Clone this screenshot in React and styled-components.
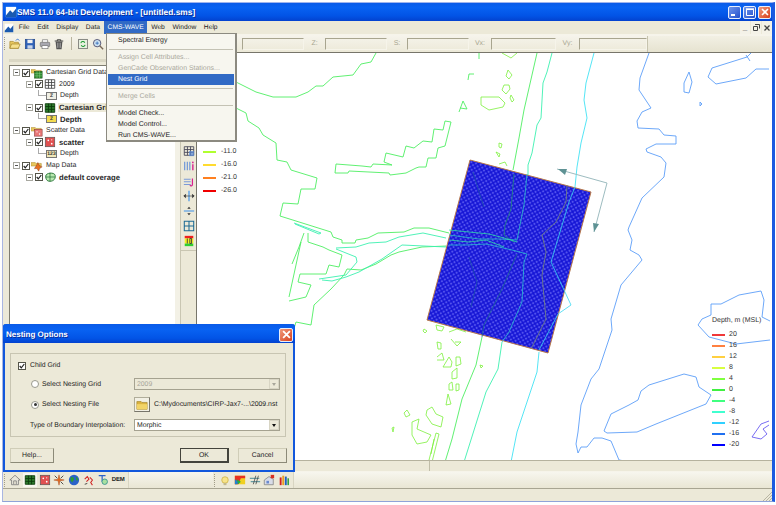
import styled, { createGlobalStyle } from 'styled-components';

const GlobalStyle = createGlobalStyle`
  html, body { margin: 0; padding: 0; background: #fff; }
  body {
    font-family: "Liberation Sans", Arial, sans-serif;
    font-size: 7px;
    color: #222;
    text-rendering: geometricPrecision;
  }
`;

const beige = '#ece9d8';

const Window = styled.div`
  position: relative;
  box-sizing: border-box;
  margin: 2px 0 0 2px;
  width: 773px;
  height: 500px;
  display: flex;
  flex-direction: column;
  background: ${beige};
  border-left: 1px solid #a9b6e2;
  border-right: 3px solid #1c5ae0;
  border-bottom: 1px solid #8fa3d8;
  border-top: 1px solid #9fb4ee;
  overflow: hidden;
  will-change: opacity;
`;

const TitleBar = styled.div`
  height: 18px;
  flex: none;
  display: flex;
  align-items: center;
  padding: 0 1px 0 2px;
  color: #fff;
  font-weight: bold;
  font-size: 8.4px;
  background: linear-gradient(#0a5be8 0%, #0862f2 25%, #0254e6 70%, #0342cf 100%);
`;

const TitleText = styled.span`
  flex: 1;
  text-shadow: 1px 1px 0 #0a2f9c;
`;

const CaptionButton = styled.div`
  width: 13px;
  height: 13px;
  margin-left: 2px;
  box-sizing: border-box;
  border: 1px solid #e8eefc;
  border-radius: 2px;
  background: ${(p) => (p.$close ? 'linear-gradient(135deg,#f09a7c,#d8401c)' : 'linear-gradient(135deg,#6f95ec,#2350cc)')};
  display: flex;
  align-items: center;
  justify-content: center;
`;

const MenuBar = styled.div`
  height: 13px;
  flex: none;
  display: flex;
  align-items: stretch;
  font-size: 6.7px;
  background: ${beige};
  border-bottom: 1px solid #f6f4ea;
`;

const MenuLogo = styled.div`
  width: 11px;
  padding-left: 1px;
  display: flex;
  align-items: center;
`;

const MenuItem = styled.div`
  padding: 0 3.8px;
  display: flex;
  align-items: center;
  color: ${(p) => (p.$active ? '#fff' : '#222')};
  background: ${(p) => (p.$active ? '#316ac5' : 'transparent')};
`;

const MdiButtons = styled.div`
  margin-left: auto;
  display: flex;
  gap: 1px;
`;

const MdiButton = styled.div`
  width: 10px;
  background: #f4f2e8;
  display: flex;
  align-items: center;
  justify-content: center;
  font-size: 8px;
  color: #444;
  font-weight: bold;
`;

const TopToolbar = styled.div`
  height: 17px;
  flex: none;
  display: flex;
  align-items: center;
  background: linear-gradient(#f6f4ec, ${beige});
`;

const Grip = styled.div`
  width: 2px;
  height: 13px;
  margin: 0 1px;
  border-left: 1px dotted #a09c88;
`;

const ToolButton = styled.div`
  width: 14.7px;
  height: 14px;
  flex: none;
  display: flex;
  align-items: center;
  justify-content: center;
  background: ${(p) => (p.$on ? '#f8f7f0' : 'transparent')};
`;

const ToolSep = styled.div`
  width: 1px;
  height: 13px;
  margin: 0 4px;
  background: #b8b49e;
`;

const CoordBar = styled.div`
  margin-left: auto;
  display: flex;
  align-items: center;
  color: #a8a690;
`;

const CoordLabel = styled.div`
  width: ${(p) => p.$w}px;
  text-align: center;
`;

const CoordField = styled.div`
  width: ${(p) => p.$w}px;
  height: 12px;
  box-sizing: border-box;
  border: 1px solid #a8a58f;
  border-right-color: #f6f4ea;
  border-bottom-color: #f6f4ea;
`;

const CoordTail = styled.div`
  width: 124px;
  height: 16px;
  flex: none;
  border-left: 1px solid #c6c3ae;
  background: linear-gradient(#f2f0e4, #e6e3d0);
`;

const Workspace = styled.div`
  flex: 1;
  min-height: 0;
  display: flex;
`;

const TreeDock = styled.div`
  width: 172px;
  flex: none;
  display: flex;
  flex-direction: column;
  padding-left: 6px;
  box-sizing: border-box;
`;

const DockHandle = styled.div`
  height: 13px;
  flex: none;
  display: flex;
  align-items: center;
  &::after {
    content: '';
    flex: 1;
    height: 3px;
    background: #dad7c4;
    margin-top: 4px;
  }
`;

const TreePanel = styled.div`
  flex: 1;
  background: #fff;
  border-top: 1px solid #7f7d70;
  border-left: 1px solid #7f7d70;
  padding-top: 1px;
`;

const TreeRow = styled.div`
  height: 11.6px;
  display: flex;
  align-items: center;
  padding-left: ${(p) => 3 + p.$level * 13}px;
  font-weight: ${(p) => (p.$bold ? 'bold' : 'normal')};
  font-size: ${(p) => (p.$bold ? 7.7 : 7)}px;
  color: #2a2a2a;
  white-space: nowrap;
`;

const LeafRow = styled(TreeRow)`
  padding-left: 28px;
`;

const Elbow = styled.div`
  width: 8px;
  height: 6px;
  flex: none;
  align-self: flex-start;
  box-sizing: border-box;
  border-left: 1px solid #aaa;
  border-bottom: 1px solid #aaa;
`;

const Expander = styled.div`
  width: 7px;
  height: 7px;
  flex: none;
  margin-right: 2px;
  box-sizing: border-box;
  border: 1px solid #a8a8a0;
  position: relative;
  &::after {
    content: '';
    position: absolute;
    left: 1px;
    right: 1px;
    top: 2px;
    height: 1px;
    background: #555;
  }
`;

const CheckBox = styled.div`
  width: 8px;
  height: 8px;
  flex: none;
  box-sizing: border-box;
  border: 1px solid #55554a;
  background: #fff;
  margin-right: 1px;
  display: flex;
  align-items: center;
  justify-content: center;
`;

const TreeLabel = styled.span`
  margin-left: 2px;
  padding: 0 1px;
  background: ${(p) => (p.$sel ? beige : 'transparent')};
  flex: none;
`;

const ValueChip = styled.div`
  width: 11px;
  height: 8px;
  flex: none;
  box-sizing: border-box;
  border: 1px solid #777;
  background: ${(p) => p.$bg || '#f0efe6'};
  font-size: 5px;
  font-weight: bold;
  line-height: 6px;
  text-align: center;
  color: #333;
  overflow: hidden;
`;

const ToolStrip = styled.div`
  width: 22px;
  flex: none;
  display: flex;
  flex-direction: column;
  align-items: center;
  padding-left: 6px;
  box-sizing: border-box;
  background: linear-gradient(90deg, #f3f1e6 0 5px, #c9c6b2 5px 6px, ${beige} 6px);
  border-right: 1px solid #77756a;
`;

const StripIcons = styled.div`
  margin-top: 92px;
  display: flex;
  flex-direction: column;
  width: 100%;
  align-items: center;
  gap: 1px;
  padding-bottom: 2px;
  border-bottom: 1px solid #c9c6b2;
`;

const Canvas = styled.div`
  position: relative;
  flex: 1;
  background: #fff;
  border-top: 1px solid #77756a;
  overflow: hidden;
`;

const MapSvg = styled.svg`
  display: block;
  width: 574px;
  height: 412px;
`;

const Legend = styled.div`
  position: absolute;
  left: ${(p) => p.$x}px;
  top: ${(p) => p.$y}px;
  color: #333;
`;

const LegendTitle = styled.div`
  margin-bottom: 4px;
  height: 8px;
  line-height: 8px;
  white-space: nowrap;
`;

const LegendRow = styled.div`
  height: ${(p) => p.$h}px;
  display: flex;
  align-items: center;
`;

const Swatch = styled.div`
  width: 13px;
  height: 2px;
  margin-right: ${(p) => p.$gap}px;
  background: ${(p) => p.$c};
`;

const StatusRow = styled.div`
  height: 10px;
  flex: none;
  display: flex;
  border-top: 1px solid #b5b29e;
  border-bottom: 1px solid #f6f4ea;
`;

const StatusCell = styled.div`
  width: ${(p) => p.$w}px;
  flex: ${(p) => (p.$w ? 'none' : 1)};
  border-right: ${(p) => (p.$w ? '1px solid #c0bda8' : 'none')};
`;

const BottomToolbar = styled.div`
  height: 16px;
  flex: none;
  display: flex;
  align-items: center;
  background: linear-gradient(#f7f6ee, #e9e6d4);
  border-bottom: 1px solid #a8a592;
`;

const ToolGroup = styled.div`
  display: flex;
  align-items: center;
  width: ${(p) => p.$w}px;
  flex: none;
  height: 100%;
  border-right: 1px solid #d8d5c2;
  background: ${beige};
`;

const BlankBand = styled.div`
  width: ${(p) => p.$w}px;
  flex: none;
`;

const DemText = styled.span`
  font-size: 6px;
  font-weight: bold;
  line-height: 14px;
  color: #222;
  letter-spacing: -0.2px;
`;

const StatusBar = styled.div`
  height: 12px;
  flex: none;
  position: relative;
  background: ${beige};
`;

const Dropdown = styled.div`
  position: absolute;
  left: 103px;
  top: 30px;
  width: 131px;
  height: 109px;
  box-sizing: border-box;
  padding: 1px;
  font-size: 6.95px;
  background: #f7f6ef;
  border: 1px solid #8c8a80;
  border-right-width: 2px;
  border-bottom-width: 2px;
  z-index: 5;
`;

const DropItem = styled.div`
  height: 11px;
  line-height: 11px;
  padding-left: 10px;
  white-space: nowrap;
  color: ${(p) => (p.$off ? '#aaa89c' : p.$hot ? '#fff' : '#222')};
  background: ${(p) => (p.$hot ? '#316ac5' : 'transparent')};
`;

const DropSep = styled.div`
  height: 1px;
  margin: 2.5px 1px;
  background: #c4c2b4;
`;

const Dialog = styled.div`
  position: absolute;
  left: 0;
  top: 321px;
  width: 292px;
  height: 148px;
  box-sizing: border-box;
  display: flex;
  flex-direction: column;
  font-size: 6.85px;
  background: ${beige};
  border: 2px solid #1257dc;
  border-top: none;
  border-radius: 3px 3px 0 0;
  z-index: 6;
`;

const DialogTitle = styled.div`
  height: 19px;
  margin: 0 -2px;
  flex: none;
  display: flex;
  align-items: center;
  justify-content: space-between;
  padding: 2px 2px 0 3px;
  box-sizing: border-box;
  color: #fff;
  font-weight: bold;
  font-size: 8px;
  border-radius: 3px 3px 0 0;
  background: linear-gradient(#0a5be8, #0862f2 30%, #0254e6 75%, #0342cf);
  text-shadow: 1px 1px 0 #0a2f9c;
`;

const DialogClose = styled(CaptionButton)`
  width: 14px;
  height: 14px;
`;

const GroupBox = styled.div`
  margin: 10px 7px 0 5px;
  height: 84px;
  box-sizing: border-box;
  border: 1px solid #c8c5b2;
  padding: 7px 5px 0 7px;
  display: flex;
  flex-direction: column;
`;

const FieldRow = styled.div`
  display: flex;
  align-items: center;
  height: ${(p) => p.$h}px;
  margin-top: ${(p) => p.$mt || 0}px;
  padding-left: ${(p) => p.$indent || 0}px;
  flex: none;
`;

const FieldLabel = styled.span`
  width: ${(p) => p.$w}px;
  margin-left: ${(p) => p.$ml || 0}px;
  flex: none;
  white-space: nowrap;
`;

const Radio = styled.div`
  width: 8px;
  height: 8px;
  margin-right: 3px;
  flex: none;
  border-radius: 50%;
  box-sizing: border-box;
  border: 1px solid #9a9a8e;
  background: #fff;
  display: flex;
  align-items: center;
  justify-content: center;
  &::after {
    content: '';
    width: 3px;
    height: 3px;
    border-radius: 50%;
    background: ${(p) => (p.$on ? '#333' : 'transparent')};
  }
`;

const Select = styled.div`
  width: 146px;
  height: 12px;
  box-sizing: border-box;
  flex: none;
  display: flex;
  align-items: center;
  justify-content: space-between;
  padding-left: 2px;
  border: 1px solid #a5a290;
  background: ${(p) => (p.$off ? beige : '#fff')};
  color: ${(p) => (p.$off ? '#a8a69a' : '#222')};
`;

const SelectArrow = styled.div`
  width: 10px;
  height: 10px;
  box-sizing: border-box;
  border: 1px solid #d8d5c4;
  background: ${beige};
  display: flex;
  align-items: center;
  justify-content: center;
  &::after {
    content: '';
    border-left: 2.5px solid transparent;
    border-right: 2.5px solid transparent;
    border-top: 3px solid ${(p) => (p.$off ? '#a8a69a' : '#111')};
  }
`;

const FolderButton = styled.div`
  width: 16px;
  height: 15px;
  flex: none;
  box-sizing: border-box;
  border: 1px solid #b0ad9a;
  border-right-color: #77756a;
  border-bottom-color: #77756a;
  background: #f2f0e4;
  margin-right: 4px;
  display: flex;
  align-items: center;
  justify-content: center;
`;

const PathText = styled.span`
  white-space: nowrap;
  font-size: 6.9px;
`;

const ButtonRow = styled.div`
  margin: 11px 7px 0 5px;
  display: flex;
`;

const PushButton = styled.div`
  width: ${(p) => p.$w}px;
  margin-left: ${(p) => p.$ml || 0}px;
  height: 15px;
  flex: none;
  box-sizing: border-box;
  display: flex;
  align-items: center;
  justify-content: center;
  background: ${beige};
  border: 1px solid ${(p) => (p.$main ? '#44443c' : '#d0cdb8')};
  border-right: ${(p) => (p.$main ? 2 : 1)}px solid ${(p) => (p.$main ? '#44443c' : '#8c8a78')};
  border-bottom: ${(p) => (p.$main ? 2 : 1)}px solid ${(p) => (p.$main ? '#44443c' : '#8c8a78')};
`;

const Resize = styled.svg`
  position: absolute;
  right: 0;
  bottom: 0;
`;

const GlyphSvg = styled.svg`
  flex: none;
  display: block;
`;

// --- icons --------------------------------------------------------------

const TinyCheck = () => (
  <svg width="6" height="6" viewBox="0 0 6 6">
    <path d="M.7 3 2.3 4.8 5.3 1" fill="none" stroke="#222" strokeWidth="1.2" />
  </svg>
);

const gridLines = (c) => (
  <path d="M1.5 2h11v10h-11zM1.5 5.3h11M1.5 8.6h11M5.2 2v10M8.8 2v10" fill="none" stroke={c} strokeWidth="1" />
);

const ICONS = {
  logo: (
    <>
      <rect x="1" y="1" width="12" height="12" fill="#fff" />
      <path d="M1 11 6 5l3 3 4-5v10H1z" fill="#1a5ab0" />
    </>
  ),
  open: (
    <>
      <path d="M1 4h4l1 1h5v7H1z" fill="#e8c860" stroke="#9a7a20" strokeWidth=".7" />
      <path d="M3 7h10l-2 5H1z" fill="#f6e08c" stroke="#9a7a20" strokeWidth=".7" />
      <path d="M8 3c1-2 3-2 4 0" fill="none" stroke="#2a6ad0" strokeWidth="1" />
    </>
  ),
  save: (
    <>
      <rect x="1.5" y="1.5" width="11" height="11" fill="#2f62b8" stroke="#1d3f80" strokeWidth=".7" />
      <rect x="4" y="2" width="6" height="4" fill="#f0f0f0" />
      <rect x="4" y="8.5" width="6" height="4" fill="#c8d4e8" />
    </>
  ),
  print: (
    <>
      <path d="M4 5V2h6v3" fill="#fff" stroke="#666" strokeWidth=".7" />
      <rect x="1.5" y="5" width="11" height="5" rx="1" fill="#a8a8b0" stroke="#666" strokeWidth=".7" />
      <rect x="3.5" y="9" width="7" height="3.5" fill="#fff" stroke="#666" strokeWidth=".7" />
    </>
  ),
  trash: (
    <>
      <path d="M2 3.5h10M5 3.5V2h4v1.5" fill="none" stroke="#333" strokeWidth="1" />
      <path d="M3 4h8l-1 9H4z" fill="#555" />
      <path d="M5.3 5.5v6M7 5.5v6M8.7 5.5v6" stroke="#ccc" strokeWidth=".6" />
    </>
  ),
  refresh: (
    <>
      <rect x="2" y="1.5" width="10" height="11" fill="#e8f0e0" stroke="#444" strokeWidth=".7" />
      <path d="M4.5 6a2.5 2.5 0 0 1 4.6-.6M9.5 8a2.5 2.5 0 0 1-4.6.6" fill="none" stroke="#1a9a30" strokeWidth="1.2" />
    </>
  ),
  zoom: (
    <>
      <circle cx="6" cy="6" r="4.3" fill="#cfe4f4" stroke="#446" strokeWidth="1" />
      <path d="M9 9l4 4" stroke="#765" strokeWidth="1.6" />
      <path d="M4 6h4M6 4v4" stroke="#1a5ab0" strokeWidth=".8" />
    </>
  ),
  treeCart: (
    <>
      <path d="M0 3h5l1 1h6v3H0z" fill="#e8c860" stroke="#a88a30" strokeWidth=".6" />
      <rect x="4" y="5" width="9" height="8" fill="#2d8a2d" stroke="#1a4a1a" strokeWidth=".6" />
      <path d="M4 7.7h9M4 10.3h9M7 5v8M10 5v8" stroke="#9ad89a" strokeWidth=".5" />
    </>
  ),
  treeScatter: (
    <>
      <path d="M0 3h5l1 1h6v3H0z" fill="#e8c860" stroke="#a88a30" strokeWidth=".6" />
      <rect x="4" y="5" width="9" height="8" fill="#e87878" stroke="#803030" strokeWidth=".6" />
      <circle cx="7" cy="8" r=".8" fill="#fff" />
      <circle cx="10" cy="10.5" r=".8" fill="#fff" />
    </>
  ),
  treeMap: (
    <>
      <path d="M0 3h5l1 1h6v3H0z" fill="#e8c860" stroke="#a88a30" strokeWidth=".6" />
      <path d="M8 3l2 4 3 1-3 2-1 3-2-3-3 0 2-3z" fill="#e87020" stroke="#803010" strokeWidth=".5" />
    </>
  ),
  gridGray: gridLines('#444'),
  gridGreen: (
    <>
      <rect x="1.5" y="2" width="11" height="10" fill="#2c7a2c" />
      {gridLines('#0c3a0c')}
    </>
  ),
  scatter: (
    <>
      <rect x="1.5" y="1.5" width="11" height="11" fill="#e05050" stroke="#555" strokeWidth=".8" />
      <circle cx="5" cy="5" r="1" fill="#fff" />
      <circle cx="9" cy="9" r="1" fill="#fff" />
      <circle cx="9" cy="4.5" r=".7" fill="#fff" />
    </>
  ),
  coverage: (
    <>
      <path d="M2 6c0-4 10-5 11-1s-2 7-6 7-5-3-5-6z" fill="#b8e8b0" stroke="#1c6a2c" strokeWidth="1" />
      <path d="M7 2v10M2 7h11" stroke="#1c6a2c" strokeWidth=".8" />
    </>
  ),
  stripGrid: (
    <>
      {gridLines('#445')}
      <path d="M7 7h6v6H7z" fill="#5a8ad8" opacity=".7" />
    </>
  ),
  stripBars: (
    <>
      <path d="M2 2v10M5 2v10M8 2v10" stroke="#5a8ad8" strokeWidth="1.2" fill="none" />
      <path d="M11.5 5v7" stroke="#d82090" strokeWidth="1.6" />
      <circle cx="11.5" cy="2.8" r="1" fill="#d82090" />
    </>
  ),
  stripLines: (
    <>
      <path d="M1 5h8M1 8h8M1 11h8" stroke="#7a9ad8" strokeWidth="1.2" />
      <path d="M11 4v7c0 2-2 2-3 1" fill="none" stroke="#d82090" strokeWidth="1.4" />
    </>
  ),
  splitH: (
    <>
      <path d="M7 1v12" stroke="#5aa0e8" strokeWidth="1.6" />
      <path d="M1 7h12M1 7l2-2v4zM13 7l-2-2v4z" fill="#333" stroke="#333" strokeWidth=".7" />
    </>
  ),
  splitV: (
    <>
      <path d="M1 7h12" stroke="#5aa0e8" strokeWidth="1.4" />
      <path d="M7 2l-2 2.5h4zM7 12l-2-2.5h4z" fill="#333" />
    </>
  ),
  quad: (
    <path d="M1.5 1.5h11v11h-11zM7 1.5v11M1.5 7h11" fill="none" stroke="#1c6a94" strokeWidth="1.2" />
  ),
  legend10: (
    <>
      <rect x="2" y="1" width="10" height="3" fill="#f02020" />
      <rect x="2" y="4" width="10" height="6" fill="#f4f020" />
      <rect x="2" y="10" width="10" height="3" fill="#30d030" />
      <path d="M5 4v6M8 4h2v6H8z" fill="none" stroke="#333" strokeWidth="1" />
    </>
  ),
  house: (
    <path d="M7 1.5 1 7h2v5.5h8V7h2zM5.5 12V8h3v4" fill="#e8e6da" stroke="#777" strokeWidth=".9" />
  ),
  star: (
    <>
      <path d="M7 1 8 6l5 1-5 1-1 5-1-5-5-1 5-1z" fill="#e86818" stroke="#a03808" strokeWidth=".5" />
      <path d="M2 2l3 3M12 12 9 9M12 2 9 5" stroke="#222" strokeWidth=".9" />
    </>
  ),
  globe: (
    <>
      <circle cx="7" cy="7" r="6" fill="#2a62c8" />
      <path d="M3 4c2-1 4 0 4 2s-2 2-2 4L3 8zM9 3c2 1 3 3 3 4l-2 1z" fill="#2a9a3a" />
    </>
  ),
  squiggle: (
    <>
      <path d="M2 6 5 3l2 3-3 3M8 4l3 3-2 3 2 3" fill="none" stroke="#d02020" strokeWidth="1.2" />
      <path d="M2 12l3-1" stroke="#333" strokeWidth="1" />
    </>
  ),
  mapText: (
    <>
      <path d="M2 2h8M6 2v7" stroke="#2a62c8" strokeWidth="1.4" />
      <circle cx="9" cy="9" r="3.2" fill="#a8e0a0" stroke="#2a8a8a" strokeWidth=".9" />
    </>
  ),
  bulb: (
    <>
      <circle cx="7" cy="7" r="3.8" fill="#f6e48c" stroke="#c8a838" strokeWidth=".8" />
      <rect x="5.3" y="10.5" width="3.4" height="2.5" fill="#c0b890" />
    </>
  ),
  rainbow: (
    <>
      <rect x="1" y="2" width="12" height="10" fill="#f0d020" />
      <path d="M1 2h12v3H8L5 12H1z" fill="#e83020" />
      <path d="M1 6l4 3-1 3H1z" fill="#2080d0" />
      <path d="M3 6l5 3-3 3z" fill="#20b040" />
    </>
  ),
  flow: (
    <>
      <path d="M1 5h11M2 9h11" stroke="#2a7a8a" strokeWidth="1" />
      <path d="M8 2l-3 10M11 2 8 12" stroke="#444" strokeWidth=".9" />
    </>
  ),
  box: (
    <>
      <path d="M1.5 7 7 3l5 3v6.5H1.5z" fill="#d8dce8" stroke="#777" strokeWidth=".8" />
      <rect x="9" y="1" width="4" height="4" fill="#d83020" />
      <rect x="4" y="8" width="3" height="3" fill="#6a8ad0" />
    </>
  ),
  bars: (
    <>
      <rect x="2" y="4" width="2.2" height="9" fill="#d02020" />
      <rect x="5" y="2" width="2.2" height="11" fill="#e8a020" />
      <rect x="8" y="3" width="2.2" height="10" fill="#2060c0" />
      <rect x="11" y="5" width="1.8" height="8" fill="#30a040" />
    </>
  ),
  folderBig: (
    <>
      <path d="M1 3h5l1 1h6v8H1z" fill="#dcb440" stroke="#9a7a20" strokeWidth=".7" />
      <path d="M1 6h12v6H1z" fill="#f2d468" />
    </>
  ),
};

const Glyph = ({ name, size = 12 }) => (
  <GlyphSvg width={size} height={size} viewBox="0 0 14 14">
    {ICONS[name]}
  </GlyphSvg>
);

// --- map data, in page coordinates ---------------------------------------

const GREEN = '#4eee62';
const TEAL = '#3cf0b0';
const CYAN = '#42e2f4';
const BLUE = '#5c9ef8';
const LIME = '#7cf03c';

const contours = [
  [GREEN, '237,80 257,90 274,95 297,95 309,90 317,84 324,84 334,75 354,73 362,62 372,60 377,51'],
  [GREEN, '237,106 247,111 249,119 260,126 264,133 277,141 278,158 288,160 292,168 318,176 316,187 302,187 299,202 284,201 281,214 332,230 334,235 343,238 343,241 356,241 357,238 369,236 379,231 405,230 415,226 430,226 450,231'],
  [GREEN, '337,162 336,171 349,171 350,169 390,171 391,173 407,171 417,166 420,165 427,165 429,156 437,156 439,146 446,144 452,120 446,119 444,128 435,127 433,140 424,139 415,146 407,144 404,155 387,151 385,160 393,163 374,162 372,165 363,164 337,162'],
  [GREEN, '305,231 300,245 293,262'],
  [GREEN, '309,231 309,240 324,245 330,248 343,253 340,265 330,263 327,272 301,272 299,280 312,283 307,295 290,299'],
  [GREEN, '302,240 290,295'],
  [GREEN, '293,333 297,320 312,323 315,303 332,287 345,273 348,267 362,268 377,262 392,253 400,250 423,245 447,244'],
  [GREEN, '460,110 464,99 468,107 461,106'],
  [GREEN, '480,51 480,57'],
  [GREEN, '469,78 470,72 475,72'],
  [GREEN, '538,51 525,108 520,136 514,168'],
  [GREEN, '483,335 477,363 463,397 453,437 446,460'],
  [TEAL, '337,246 357,245 370,241 387,240 400,235 424,231 447,236'],
  [TEAL, '320,277 347,273 358,260 357,255 337,247'],
  [TEAL, '323,278 333,279 347,275 360,270 383,257 403,243 447,245'],
  [TEAL, '295,221 322,231 320,232 296,222'],
  [TEAL, '553,51 548,70 544,81 542,116 538,123 533,151 529,163 529,175'],
  [TEAL, '503,340 499,367 487,390 465,460'],
  [CYAN, '595,51 587,81 585,98 588,116 582,141 578,165 576,185'],
  [CYAN, '540,350 538,370 518,430 512,460'],
  [BLUE, '650,51 641,76 640,88 652,106 643,110 638,119 639,126 660,127 665,133 677,134 677,142 657,142 647,147 648,150 662,155 667,161 665,175 643,196 630,225 629,228 633,238 631,248 640,253 643,258 622,283 612,317 613,328 600,367 592,377 582,403 579,430 577,442 579,451 582,445 588,445 595,436 603,436 612,439 620,458 632,460'],
  [BLUE, '605,429 612,412 630,403 639,398 642,389 650,383 685,372 697,375 700,385 712,393 707,402 657,422 638,430 608,431 605,429'],
  [BLUE, '771,319 763,315 765,298 762,289 740,293 722,302 712,302 712,313 703,317 699,323 710,335 737,342 771,338'],
  [BLUE, '752,51 748,55 713,66 709,75 717,82 747,76 757,67 770,67'],
  [BLUE, '747,53 751,59'],
  [BLUE, '690,70 685,81 685,90 690,91 693,80 690,70'],
  [BLUE, '701,100 703,102 701,104 701,100'],
  ['#6a5cf0', '770,419 762,422 753,435 762,437 768,432 764,427 770,423'],
];

const islets = [
  '482,95 500,95 506,101 504,105 490,108 482,103 482,95',
  '509,68 513,73 510,77 507,74 509,68',
  '505,83 510,83 511,87 507,92 503,88 505,83',
  '512,93 515,98 513,100 511,96 512,93',
  '503,51 512,56 518,51',
  '500,141 503,142 502,146 500,145 500,141',
  '497,150 501,152 500,155 497,150',
  '500,162 506,160 508,164',
  '437,323 445,325 443,329 438,328 437,323',
  '450,330 458,327 467,330',
  '456,340 462,340 458,344 452,337',
  '425,327 428,329 426,331 424,329 425,327',
  '438,340 442,341 442,347 439,347 438,340',
  '438,355 443,351 445,358 438,358',
  '444,365 450,355 453,360 452,365 444,365',
  '457,355 461,355 462,362 457,364 457,355',
  '453,370 458,366 458,376 453,377 453,370',
  '450,382 453,380 454,388 450,388 450,382',
  '457,382 460,382 460,388 457,389 457,382',
  '447,403 449,392 452,402 447,403',
  '408,408 411,413 407,415 405,411 408,408',
  '393,426 395,425 394,430 393,426',
  '428,408 433,405 437,412 444,415 442,425 433,422 427,413 428,408',
  '413,420 420,417 418,427 432,433 428,440 418,442 413,433 413,420',
  '437,431 440,432 433,460 430,458 437,431',
  '435,437 432,452',
  '481,363 484,364 482,366 481,363',
];

const gridLinesOver = [
  ['#1f8a7a', '515,172 512,207 506,223 505,233 515,240'],
  ['#2ac0c8', '528,172 525,203 518,238 500,237 480,237 450,233'],
  ['#2ce0a8', '450,228 470,230 490,232 505,236 518,240'],
  ['#2ac0d0', '450,243 467,243 487,242 513,248 528,252 525,260 523,300 510,330 503,340'],
  ['#2ce0a8', '450,238 470,240 487,238 505,245'],
  ['#1a6a90', '518,252 503,287 485,323 483,335'],
  ['#1a50a8', '474,170 480,190 485,205'],
  ['#1a50a8', '470,255 478,280 472,305'],
  ['#7a8a78', '568,183 567,200 557,220 543,233 547,250 543,273 547,317 532,347'],
  ['#38d8f0', '576,185 570,200 552,260 572,303 559,312 540,348'],
];

const TOP_LEGEND = [
  ['-11.0', '#b0ff30'],
  ['-16.0', '#ffdb30'],
  ['-21.0', '#ff8020'],
  ['-26.0', '#f00000'],
];

const DEPTH_LEGEND = [
  ['20', '#f03838'],
  ['16', '#ff8040'],
  ['12', '#ffd040'],
  ['8', '#d8ff40'],
  ['4', '#80ff40'],
  ['0', '#40f040'],
  ['-4', '#40ff80'],
  ['-8', '#40ffd0'],
  ['-12', '#30d0ff'],
  ['-16', '#2070f0'],
  ['-20', '#0000ff'],
];

const MapView = () => (
  <MapSvg viewBox="198 51 574 412">
    <defs>
      <pattern id="mesh" width="3.4" height="3.4" patternUnits="userSpaceOnUse" patternTransform="rotate(60)">
        <rect width="3.4" height="3.4" fill="#2020dc" />
        <rect width="1.7" height="1.7" fill="#5252ec" />
        <rect x="1.7" y="1.7" width="1.7" height="1.7" fill="#1616d2" />
      </pattern>
    </defs>
    {contours.map(([c, pts], i) => (
      <polyline key={i} points={pts} fill="none" stroke={c} strokeWidth="0.9" />
    ))}
    {islets.map((pts, i) => (
      <polyline key={i} points={pts} fill="none" stroke={LIME} strokeWidth="0.8" />
    ))}
    <polygon points="471,158 592,190 549,351 428,318" fill="url(#mesh)" stroke="#b87848" strokeWidth="1" />
    {gridLinesOver.map(([c, pts], i) => (
      <polyline key={i} points={pts} fill="none" stroke={c} strokeWidth="0.8" />
    ))}
    <polyline points="558,167 608,181 595,230" fill="none" stroke="#9dbcc0" strokeWidth="1" />
    <polygon points="559,167 568,167 566,173" fill="#5e9294" />
    <polygon points="595,230 594,221 600,222" fill="#5e9294" />
  </MapSvg>
);

const TreeItem = ({ level, bold, sel, icon, children }) => (
  <TreeRow $level={level} $bold={bold}>
    <Expander />
    <CheckBox>
      <TinyCheck />
    </CheckBox>
    <Glyph name={icon} />
    <TreeLabel $sel={sel}>{children}</TreeLabel>
  </TreeRow>
);

const Leaf = ({ bold, sel, chip, bg, children }) => (
  <LeafRow $bold={bold}>
    <Elbow />
    <ValueChip $bg={bg}>{chip}</ValueChip>
    <TreeLabel $sel={sel}>{children}</TreeLabel>
  </LeafRow>
);

export default function App() {
  return (
    <>
      <GlobalStyle />
      <Window>
        <TitleBar>
          <Glyph name="logo" />
          <TitleText>SMS 11.0 64-bit Development - [untitled.sms]</TitleText>
          <CaptionButton>
            <svg width="7" height="7" viewBox="0 0 7 7"><rect x="0" y="5" width="4" height="2" fill="#fff" /></svg>
          </CaptionButton>
          <CaptionButton>
            <svg width="8" height="8" viewBox="0 0 8 8"><path d="M.5 1.5h7v6h-7z" fill="none" stroke="#fff" /><path d="M0 1h8" stroke="#fff" strokeWidth="1.4" /></svg>
          </CaptionButton>
          <CaptionButton $close>
            <svg width="8" height="8" viewBox="0 0 8 8"><path d="M1 1l6 6M7 1 1 7" stroke="#fff" strokeWidth="1.6" /></svg>
          </CaptionButton>
        </TitleBar>
        <MenuBar>
          <MenuLogo><Glyph name="logo" size={10} /></MenuLogo>
          <MenuItem>File</MenuItem>
          <MenuItem>Edit</MenuItem>
          <MenuItem>Display</MenuItem>
          <MenuItem>Data</MenuItem>
          <MenuItem $active>CMS-WAVE</MenuItem>
          <MenuItem>Web</MenuItem>
          <MenuItem>Window</MenuItem>
          <MenuItem>Help</MenuItem>
          <MdiButtons>
            <MdiButton>_</MdiButton>
            <MdiButton>
              <svg width="7" height="7" viewBox="0 0 7 7"><path d="M2 .5h4.5v4M.5 2.5h4v4h-4z" fill="none" stroke="#444" /></svg>
            </MdiButton>
            <MdiButton>
              <svg width="6" height="6" viewBox="0 0 6 6"><path d="M.5.5l5 5M5.5.5l-5 5" stroke="#444" strokeWidth="1.3" /></svg>
            </MdiButton>
          </MdiButtons>
        </MenuBar>
        <TopToolbar>
          <Grip />
          <ToolButton><Glyph name="open" /></ToolButton>
          <ToolButton><Glyph name="save" /></ToolButton>
          <ToolButton><Glyph name="print" /></ToolButton>
          <ToolButton><Glyph name="trash" /></ToolButton>
          <ToolSep />
          <ToolButton><Glyph name="refresh" /></ToolButton>
          <ToolButton><Glyph name="zoom" /></ToolButton>
          <CoordBar>
            <CoordField $w={62} />
            <CoordLabel $w={21}>Z:</CoordLabel>
            <CoordField $w={62} />
            <CoordLabel $w={20}>S:</CoordLabel>
            <CoordField $w={62} />
            <CoordLabel $w={22}>Vx:</CoordLabel>
            <CoordField $w={65} />
            <CoordLabel $w={23}>Vy:</CoordLabel>
            <CoordField $w={68} />
          </CoordBar>
          <CoordTail />
        </TopToolbar>
        <Workspace>
          <TreeDock>
            <DockHandle />
            <TreePanel>
              <TreeItem level={0} icon="treeCart">Cartesian Grid Data</TreeItem>
              <TreeItem level={1} icon="gridGray">2009</TreeItem>
              <Leaf chip="Z">Depth</Leaf>
              <TreeItem level={1} bold sel icon="gridGreen">Cartesian Grid</TreeItem>
              <Leaf bold chip="Z" bg="#f4dc50">Depth</Leaf>
              <TreeItem level={0} icon="treeScatter">Scatter Data</TreeItem>
              <TreeItem level={1} bold icon="scatter">scatter</TreeItem>
              <Leaf chip="123" bg="#f0e8b8">Depth</Leaf>
              <TreeItem level={0} icon="treeMap">Map Data</TreeItem>
              <TreeItem level={1} bold icon="coverage">default coverage</TreeItem>
            </TreePanel>
          </TreeDock>
          <ToolStrip>
            <StripIcons>
              <ToolButton><Glyph name="stripGrid" /></ToolButton>
              <ToolButton><Glyph name="stripBars" /></ToolButton>
              <ToolButton><Glyph name="stripLines" /></ToolButton>
              <ToolButton><Glyph name="splitH" /></ToolButton>
              <ToolButton><Glyph name="splitV" /></ToolButton>
              <ToolButton><Glyph name="quad" /></ToolButton>
              <ToolButton><Glyph name="legend10" /></ToolButton>
            </StripIcons>
          </ToolStrip>
          <Canvas>
            <MapView />
            <Legend $x={6} $y={92}>
              {TOP_LEGEND.map(([t, c]) => (
                <LegendRow key={t} $h={13}>
                  <Swatch $c={c} $gap={5} />
                  {t}
                </LegendRow>
              ))}
            </Legend>
            <Legend $x={515} $y={264}>
              <LegendTitle>Depth, m (MSL)</LegendTitle>
              {DEPTH_LEGEND.map(([t, c]) => (
                <LegendRow key={t} $h={11}>
                  <Swatch $c={c} $gap={4} />
                  {t}
                </LegendRow>
              ))}
            </Legend>
          </Canvas>
        </Workspace>
        <StatusRow>
          <StatusCell $w={426} />
          <StatusCell />
        </StatusRow>
        <BottomToolbar>
          <ToolGroup $w={125}>
            <Grip />
            <ToolButton><Glyph name="house" /></ToolButton>
            <ToolButton $on><Glyph name="gridGreen" /></ToolButton>
            <ToolButton><Glyph name="scatter" /></ToolButton>
            <ToolButton><Glyph name="star" /></ToolButton>
            <ToolButton><Glyph name="globe" /></ToolButton>
            <ToolButton><Glyph name="squiggle" /></ToolButton>
            <ToolButton><Glyph name="mapText" /></ToolButton>
            <ToolButton><DemText>DEM</DemText></ToolButton>
          </ToolGroup>
          <BlankBand $w={84} />
          <ToolGroup $w={80}>
            <Grip />
            <ToolButton><Glyph name="bulb" /></ToolButton>
            <ToolButton><Glyph name="rainbow" /></ToolButton>
            <ToolButton><Glyph name="flow" /></ToolButton>
            <ToolButton><Glyph name="box" /></ToolButton>
            <ToolButton><Glyph name="bars" /></ToolButton>
          </ToolGroup>
        </BottomToolbar>
        <StatusBar>
          <Resize width="10" height="10" viewBox="0 0 10 10">
            <path d="M10 1 1 10M10 4 4 10M10 7 7 10" stroke="#b8b5a2" />
          </Resize>
        </StatusBar>

        <Dropdown>
          <DropItem>Spectral Energy</DropItem>
          <DropSep />
          <DropItem $off>Assign Cell Attributes...</DropItem>
          <DropItem $off>GenCade Observation Stations...</DropItem>
          <DropItem $hot>Nest Grid</DropItem>
          <DropSep />
          <DropItem $off>Merge Cells</DropItem>
          <DropSep />
          <DropItem>Model Check...</DropItem>
          <DropItem>Model Control...</DropItem>
          <DropItem>Run CMS-WAVE...</DropItem>
        </Dropdown>

        <Dialog>
          <DialogTitle>
            Nesting Options
            <DialogClose $close>
              <svg width="9" height="9" viewBox="0 0 8 8"><path d="M1 1l6 6M7 1 1 7" stroke="#fff" strokeWidth="1.6" /></svg>
            </DialogClose>
          </DialogTitle>
          <GroupBox>
            <FieldRow $h={9}>
              <CheckBox><TinyCheck /></CheckBox>
              <FieldLabel $w={60} $ml={3}>Child Grid</FieldLabel>
            </FieldRow>
            <FieldRow $h={12} $indent={13} $mt={8}>
              <Radio />
              <FieldLabel $w={92}>Select Nesting Grid</FieldLabel>
              <Select $off>2009<SelectArrow $off /></Select>
            </FieldRow>
            <FieldRow $h={15} $indent={13} $mt={7}>
              <Radio $on />
              <FieldLabel $w={92}>Select Nesting File</FieldLabel>
              <FolderButton><Glyph name="folderBig" size={12} /></FolderButton>
              <PathText>C:\Mydocuments\CIRP-Jax7-...\2009.nst</PathText>
            </FieldRow>
            <FieldRow $h={12} $indent={12} $mt={7}>
              <FieldLabel $w={104}>Type of Boundary Interpolation:</FieldLabel>
              <Select>Morphic<SelectArrow /></Select>
            </FieldRow>
          </GroupBox>
          <ButtonRow>
            <PushButton $w={44}>Help...</PushButton>
            <PushButton $w={49} $ml={126} $main>OK</PushButton>
            <PushButton $w={49} $ml={9}>Cancel</PushButton>
          </ButtonRow>
        </Dialog>
      </Window>
    </>
  );
}
